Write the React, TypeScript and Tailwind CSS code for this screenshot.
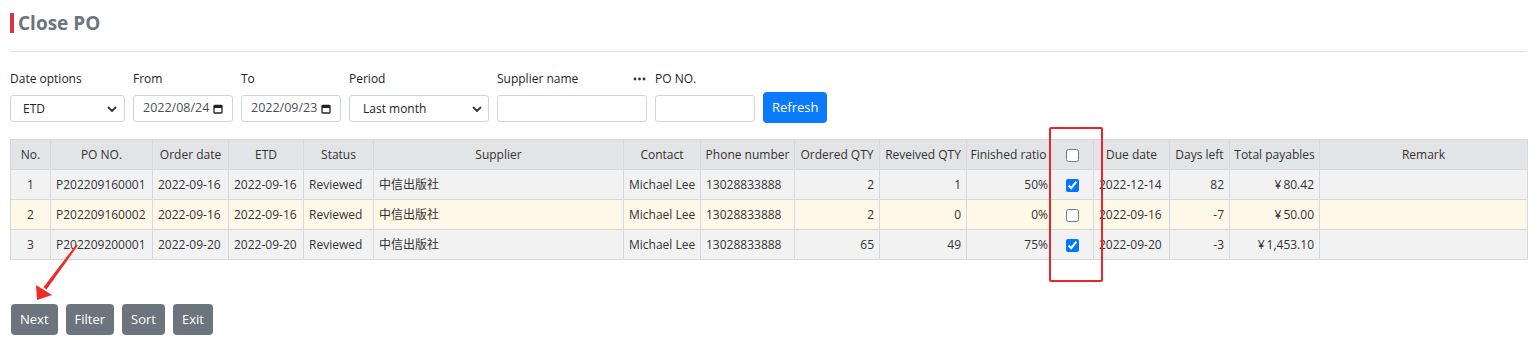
import React from "react";

const cols = [40, 102, 76, 75, 70, 250, 77, 94, 85, 87, 84, 43, 76, 60, 90, 208];

type Row = {
  no: string;
  po: string;
  od: string;
  etd: string;
  st: string;
  sup: string;
  contact: string;
  phone: string;
  oq: string;
  rq: string;
  ratio: string;
  checked: boolean;
  due: string;
  days: string;
  total: string;
};

const rows: Row[] = [
  { no: "1", po: "P202209160001", od: "2022-09-16", etd: "2022-09-16", st: "Reviewed", sup: "中信出版社", contact: "Michael Lee", phone: "13028833888", oq: "2", rq: "1", ratio: "50%", checked: true, due: "2022-12-14", days: "82", total: "¥\u200980.42" },
  { no: "2", po: "P202209160002", od: "2022-09-16", etd: "2022-09-16", st: "Reviewed", sup: "中信出版社", contact: "Michael Lee", phone: "13028833888", oq: "2", rq: "0", ratio: "0%", checked: false, due: "2022-09-16", days: "-7", total: "¥\u200950.00" },
  { no: "3", po: "P202209200001", od: "2022-09-20", etd: "2022-09-20", st: "Reviewed", sup: "中信出版社", contact: "Michael Lee", phone: "13028833888", oq: "65", rq: "49", ratio: "75%", checked: true, due: "2022-09-20", days: "-3", total: "¥\u20091,453.10" },
];

function Chevron() {
  return (
    <svg width="10" height="8" viewBox="0 0 10 8" className="shrink-0">
      <path d="M1.5 2.5 L5 6 L8.5 2.5" fill="none" stroke="#343a40" strokeWidth="1.8" strokeLinecap="round" strokeLinejoin="round" />
    </svg>
  );
}

function Calendar() {
  return (
    <svg width="10" height="10" viewBox="0 0 10 10" className="shrink-0">
      <rect x="1" y="1.5" width="8" height="7.5" rx="0.8" fill="none" stroke="#222" strokeWidth="1.3" />
      <rect x="1" y="1.5" width="8" height="2.5" fill="#222" />
    </svg>
  );
}

function Dots() {
  return (
    <svg width="13" height="4" viewBox="0 0 13 4" className="shrink-0 mr-px">
      <circle cx="2" cy="2" r="1.4" fill="#333" />
      <circle cx="6.5" cy="2" r="1.4" fill="#333" />
      <circle cx="11" cy="2" r="1.4" fill="#333" />
    </svg>
  );
}

function Field({ label, children, extra, w }: { label: string; children: React.ReactNode; extra?: React.ReactNode; w: string }) {
  return (
    <div className={`flex flex-col ${w}`}>
      <div className="flex justify-between items-center h-[17px] mb-[8px] text-[12px] text-[#212529]">
        <span>{label}</span>
        {extra}
      </div>
      {children}
    </div>
  );
}

const box = "h-[27px] w-full border border-[#ced4da] rounded-[3px] bg-white flex items-center";

export default function App() {
  const td = "border border-[#d5d8dc] h-[30px] px-[5px] whitespace-nowrap overflow-hidden";
  const th = "border border-[#d5d8dc] h-[30px] px-[3px] font-normal text-center whitespace-nowrap overflow-hidden";
  return (
    <div className="relative w-[1537px] h-[341px] bg-white px-[10px] pt-[13px] font-['Open_Sans','Noto_Sans_CJK_SC',sans-serif] text-[#212529]">
      <div className="flex items-center h-[20px]">
        <div className="w-[4px] h-[20px] bg-[#dc3545]" />
        <div className="ml-[4px] text-[19px] font-bold text-[#6c757d] leading-none">Close PO</div>
      </div>
      <div className="mt-[18px] h-px bg-[#e5e5e5]" />

      <div className="flex items-end gap-[8px] mt-[18px]">
        <Field label="Date options" w="w-[115px]">
          <div className={`${box} justify-between pl-[12px] pr-[7px] text-[12px] text-[#212529]`}>
            <span>ETD</span>
            <Chevron />
          </div>
        </Field>
        <Field label="From" w="w-[100px]">
          <div className={`${box} justify-between pl-[9px] pr-[9px] text-[12.5px] text-[#495057]`}>
            <span>2022/08/24</span>
            <Calendar />
          </div>
        </Field>
        <Field label="To" w="w-[100px]">
          <div className={`${box} justify-between pl-[9px] pr-[9px] text-[12.5px] text-[#495057]`}>
            <span>2022/09/23</span>
            <Calendar />
          </div>
        </Field>
        <Field label="Period" w="w-[140px]">
          <div className={`${box} justify-between pl-[13px] pr-[6px] text-[12px] text-[#212529]`}>
            <span>Last month</span>
            <Chevron />
          </div>
        </Field>
        <Field label="Supplier name" w="w-[150px]" extra={<Dots />}>
          <div className={box} />
        </Field>
        <Field label="PO NO." w="w-[100px]">
          <div className={box} />
        </Field>
        <button className="h-[31px] px-[9px] mb-[-1px] rounded-[4px] bg-[#0b7bfb] text-white text-[13px]">Refresh</button>
      </div>

      <table className="table-fixed border-collapse w-[1517px] mt-[17px] text-[12px] text-[#333]">
        <colgroup>
          {cols.map((c, i) => (
            <col key={i} style={{ width: c }} />
          ))}
        </colgroup>
        <thead>
          <tr className="bg-[#e3e4e6]">
            <th className={th}>No.</th>
            <th className={th}>PO NO.</th>
            <th className={th}>Order date</th>
            <th className={th}>ETD</th>
            <th className={th}>Status</th>
            <th className={th}>Supplier</th>
            <th className={th}>Contact</th>
            <th className={th}>Phone number</th>
            <th className={th}>Ordered QTY</th>
            <th className={th}>Reveived QTY</th>
            <th className={th}>Finished ratio</th>
            <th className={th}>
              <input type="checkbox" className="align-middle w-[13px] h-[13px] m-0" readOnly />
            </th>
            <th className={th}>Due date</th>
            <th className={th}>Days left</th>
            <th className={th}>Total payables</th>
            <th className={th}>Remark</th>
          </tr>
        </thead>
        <tbody>
          {rows.map((r, i) => (
            <tr key={i} className={i === 1 ? "bg-[#fef8e9]" : "bg-[#f2f2f3]"}>
              <td className={`${td} text-center`}>{r.no}</td>
              <td className={`${td} px-[3px]`}>{r.po}</td>
              <td className={td}>{r.od}</td>
              <td className={td}>{r.etd}</td>
              <td className={td}>{r.st}</td>
              <td className={td}>{r.sup}</td>
              <td className={`${td} text-center`}>{r.contact}</td>
              <td className={td}>{r.phone}</td>
              <td className={`${td} text-right`}>{r.oq}</td>
              <td className={`${td} text-right`}>{r.rq}</td>
              <td className={`${td} text-right pr-[2px]`}>{r.ratio}</td>
              <td className={`${td} text-center`}>
                <input type="checkbox" className="align-middle w-[13px] h-[13px] m-0" checked={r.checked} readOnly />
              </td>
              <td className={td}>{r.due}</td>
              <td className={`${td} text-right`}>{r.days}</td>
              <td className={`${td} text-right`}>{r.total}</td>
              <td className={td}></td>
            </tr>
          ))}
        </tbody>
      </table>

      <div className="flex gap-[8px] mt-[44px] ml-px">
        {["Next", "Filter", "Sort", "Exit"].map((b) => (
          <button key={b} className="h-[31px] px-[9px] rounded-[4px] bg-[#6c757d] text-white text-[13px]">
            {b}
          </button>
        ))}
      </div>

      <div className="absolute left-[1049px] top-[127px] w-[54px] h-[155px] border-2 border-[#e8262b] rounded-[2px] pointer-events-none" />

      <svg className="absolute left-0 top-0 pointer-events-none" width="100" height="320" viewBox="0 0 100 320">
        <polygon points="76.2,244.4 77.8,245.6 46.5,289.5 43.5,287.3" fill="#ee2b25" />
        <polygon points="37,300 36,285 52,295" fill="#ee2b25" />
      </svg>
    </div>
  );
}
